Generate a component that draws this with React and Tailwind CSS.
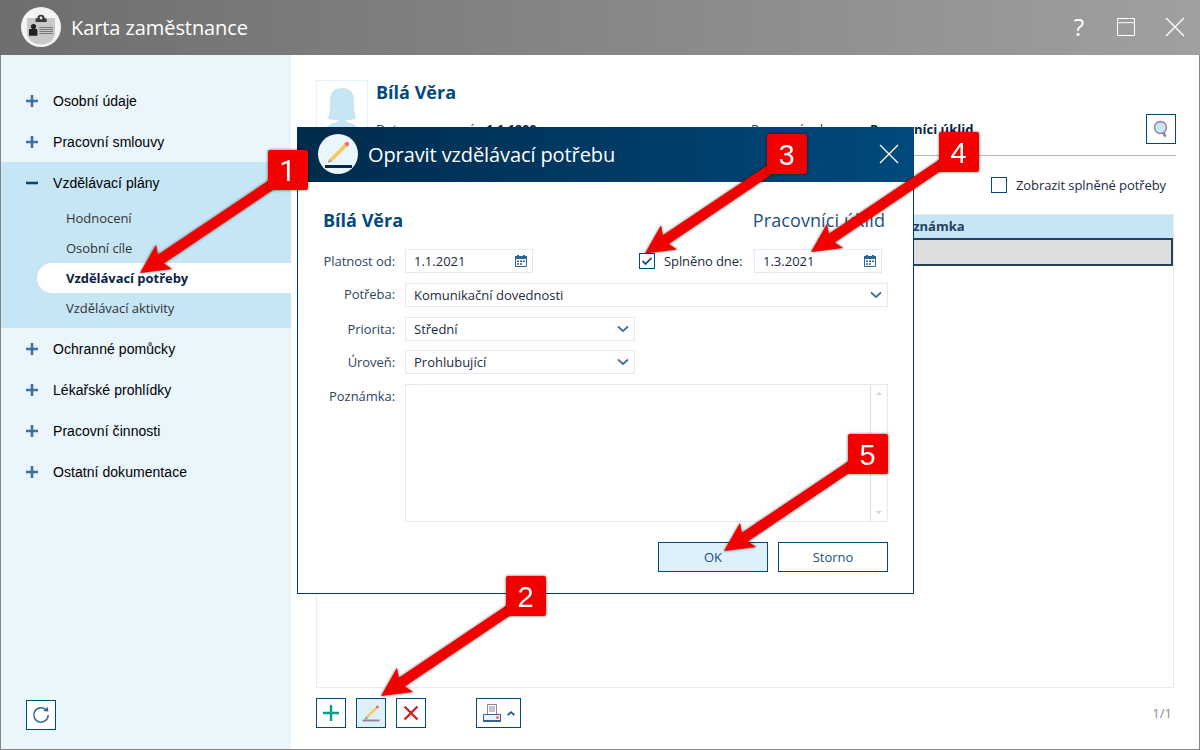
import React, { useState } from 'react';

const MENU = [
  { label: 'Osobní údaje' },
  { label: 'Pracovní smlouvy' },
  {
    label: 'Vzdělávací plány',
    children: ['Hodnocení', 'Osobní cíle', 'Vzdělávací potřeby', 'Vzdělávací aktivity'],
  },
  { label: 'Ochranné pomůcky' },
  { label: 'Lékařské prohlídky' },
  { label: 'Pracovní činnosti' },
  { label: 'Ostatní dokumentace' },
];

// x/y is the badge corner, tipX/tipY is where the arrow points
const STEPS = [
  { n: 1, x: 268, y: 150, tipX: 140, tipY: 273 },
  { n: 2, x: 506, y: 576, tipX: 381, tipY: 696 },
  { n: 3, x: 767, y: 134, tipX: 645, tipY: 253.5 },
  { n: 4, x: 939, y: 132, tipX: 811, tipY: 252 },
  { n: 5, x: 848, y: 434, tipX: 724, tipY: 551 },
];

const CardIcon = () => (
  <svg width="40" height="40" viewBox="0 0 40 40">
    <circle cx="20" cy="20" r="20" fill="#f4f4f4" />
    <path d="M6 11h28v17.500l-4 6a18 18 0 0 1-20 0l-4-6z" fill="#c8c8c8" />
    <path d="M14.500 15v-2.200q0-1.600 2-1.800.2-3.200 3.500-3.200t3.500 3.200q2.200.2 2.200 1.800V15z" fill="#3a3a3a" />
    <circle cx="20" cy="11" r="1.4" fill="#e8e8e8" />
    <circle cx="12.5" cy="19.6" r="2.6" fill="#222" />
    <path d="M8 28.700v-5.600q0-1.200 1.200-1.200h6q1.200 0 1.200 1.200v5.600z" fill="#222" />
    <path d="M18.300 20.500H32M18.300 22.500H32M18.300 24.500H32M18.300 26.500H32" stroke="#6e6e6e" strokeWidth="0.9" />
  </svg>
);

const PencilIcon = ({ size, line }) => (
  <svg width={size} height={size} viewBox="0 0 30 30">
    <path d="M8.6 21.6l2.8-.9-1.8-1.9z" fill="#555" />
    <path d="M9.6 18.8l10.2-10.3 2 2L11.4 20.7z" fill="#fac75a" />
    <path d="M9.7 18.7l1.9 1.9" stroke="#c9b7b0" strokeWidth="1.4" />
    <circle cx="21.8" cy="8.6" r="1.6" fill="#f0666c" />
    <path d="M6 23h18" stroke={line} strokeWidth="2" />
  </svg>
);

const PencilBadge = () => (
  <svg width="40" height="40" viewBox="0 0 40 40">
    <circle cx="20" cy="20" r="20" fill="#eaf5fc" />
    <path d="M10 28.7l3.6-1.1-2.3-2.5z" fill="#8b7f93" />
    <path d="M11.2 25.2l15.3-15.4 2.6 2.6-15.3 15.3z" fill="#fac75a" />
    <path d="M11.3 25.1l2.4 2.4" stroke="#cdb9b0" strokeWidth="1.6" />
    <path d="M26.3 9.8l1.2-1.3q1.5-1.4 3 0t0 3l-1.3 1.2z" fill="#f0666c" />
    <path d="M7 32.5h27" stroke="#002b4c" strokeWidth="3" />
  </svg>
);

const CalendarIcon = () => (
  <svg width="12" height="12" viewBox="0 0 12 12">
    <path d="M.5 1.5h11v10H.5z" fill="#fff" stroke="#2f6593" />
    <path d="M0 1h12v3H0zM2 0h2v2H2zM8 0h2v2H8z" fill="#2f6593" />
    <path
      d="M2 5.500h2v1.500H2zM5 5.500h2v1.500H5zM8 5.500h2v1.500H8zM2 8.200h2v1.500H2zM5 8.200h2v1.500H5z"
      fill="#2f6593"
    />
  </svg>
);

const Chevron = () => (
  <svg width="12" height="8" viewBox="0 0 12 8">
    <path d="M1 1.500l5 4.500 5-4.500" fill="none" stroke="#3f6d9b" strokeWidth="1.7" />
  </svg>
);

const CloseIcon = () => (
  <svg width="20" height="20" viewBox="0 0 20 20">
    <path d="M1 1l18 18M19 1L1 19" stroke="#fff" strokeWidth="1.3" />
  </svg>
);

const DateField = ({ value }) => (
  <div className="flex h-6 w-32 items-center justify-between border border-[#e6e6f4] bg-white pl-2 pr-[5px] text-[#1b2a41]">
    <span>{value}</span>
    <CalendarIcon />
  </div>
);

const SelectField = ({ value }) => (
  <div className="flex h-6 w-full items-center justify-between border border-[#e6e6f4] bg-white pl-2 pr-[5px] text-[#1b2a41]">
    <span>{value}</span>
    <Chevron />
  </div>
);

const Label = ({ children }) => (
  <span className="mr-2.5 w-[92px] shrink-0 text-right tracking-[-0.06px] text-[#2d4663]">{children}</span>
);

const iconButton = 'flex h-[30px] w-[30px] items-center justify-center border border-[#004a7c]';

function TitleBar() {
  return (
    <header className="flex h-[55px] shrink-0 items-center bg-linear-to-r from-[#6e6e6e] to-[#a0a0a0] pb-px pl-[21px] pr-[15px] text-white">
      <CardIcon />
      <h1 className="ml-2.5 flex-1 pt-px text-[20px] tracking-[-0.08px]">Karta zaměstnance</h1>
      <span className="mr-[33px] text-[24px] leading-8">?</span>
      <svg width="18" height="18" viewBox="0 0 18 18" className="mr-[30px]">
        <path d="M.5.5h17v17H.5zM.5 4.700h17" fill="none" stroke="#fff" />
      </svg>
      <CloseIcon />
    </header>
  );
}

function Sidebar({ active, onSelect }) {
  return (
    <aside className="flex w-[290px] shrink-0 flex-col bg-[#eaf5fc] pt-[25px]">
      {MENU.map((item) => (
        <div key={item.label} className={item.children ? 'bg-[#c6e5f5] pb-[5px]' : ''}>
          <div className="flex h-[41px] items-center pl-[25px] font-['Liberation_Sans',Arial,sans-serif] text-[14px] tracking-[0.05px] text-black">
            <svg width="12" height="12" viewBox="0 0 12 12" className="mr-[15px]">
              <path
                d={item.children ? 'M0 6h12' : 'M0 6h12M6 0v12'}
                stroke={item.children ? '#004a80' : '#3f6f9f'}
                strokeWidth="2.6"
              />
            </svg>
            <span className="pt-[2px]">{item.label}</span>
          </div>
          {item.children?.map((child) => (
            <button
              key={child}
              onClick={() => onSelect(child)}
              className={`ml-9 flex h-[30px] w-[254px] items-center rounded-l-full pl-[29px] pt-[2px] text-[13px] tracking-[-0.04px] ${
                child === active ? 'bg-white font-bold text-[#0a1f44]' : 'text-[#333]'
              }`}
            >
              {child}
            </button>
          ))}
        </div>
      ))}
      <button className={`${iconButton} mb-[19px] ml-[25px] mt-auto bg-white`}>
        <svg width="18" height="18" viewBox="0 0 18 18">
          <path d="M16.200 9a7.200 7.200 0 1 1-2.200-5.200" fill="none" stroke="#3a6d9c" strokeWidth="1.6" />
          <path d="M11.200 4.900l4.600-4 .6 4.700z" fill="#2f6593" />
        </svg>
      </button>
    </aside>
  );
}

function EmployeePanel() {
  return (
    <main className="flex flex-1 flex-col pl-[25px] pr-[23px] pt-[25px]">
      <section className="flex h-[76px] border-b border-[#b4b4b4]">
        <div className="flex h-[66px] w-[52px] justify-center border border-[#e3f2fb] pt-[7px]">
          <svg width="40" height="50" viewBox="0 0 40 50">
            <path
              d="M6 31Q8 25 8 13 8 0 20 0T32 13Q32 25 34 31 30 32 23.500 32 24 34 28 35 38 37 38 50H2Q2 37 12 35 16 34 16.500 32 10 32 6 31z"
              fill="#c6e5f5"
            />
          </svg>
        </div>
        <div className="ml-2 flex flex-1 flex-col">
          <h2 className="text-[18px] leading-6 font-bold text-[#004a80]">Bílá Věra</h2>
          <div className="mt-[16px] flex text-[13px] leading-[18px] text-[#2d4663]">
            <span className="w-[110px]">Datum narození:</span>
            <b className="w-[265px] tracking-[-0.2px] text-[#0a1f44]">1.1.1800</b>
            <span className="w-[119px]">Pracovní role:</span>
            <b className="whitespace-nowrap text-[#0a1f44]">Pracovníci úklid</b>
          </div>
        </div>
        <button className={`${iconButton} mt-[34px]`}>
          <svg width="16" height="18" viewBox="0 0 16 18">
            <path d="M9.800 12l2.700 4.600" stroke="#8f8299" strokeWidth="2.6" />
            <circle cx="7.5" cy="7.5" r="6" fill="#c6e5f5" stroke="#8f8299" strokeWidth="1.4" />
          </svg>
        </button>
      </section>

      <label className="mr-[10px] mt-[20px] flex items-center justify-end gap-[9px] text-[13px] leading-[18px] tracking-[-0.08px] text-[#1b2a41]">
        <span className="h-4 w-4 border border-[#004a7c] bg-white"></span>
        Zobrazit splněné potřeby
      </label>

      <div className="mr-[2px] mt-[20px] h-[474px] border border-[#e9e9f6]">
        <div className="h-[23px] bg-[#c6e5f5] pl-[580px] text-[13px] leading-[23px] font-bold text-[#27405c]">
          Poznámka
        </div>
        <div className="h-7 border-2 border-[#27405c] bg-[#dedede]"></div>
      </div>

      <footer className="mt-[10px] flex items-center">
        <button className={iconButton}>
          <svg width="18" height="18" viewBox="0 0 18 18">
            <path d="M1 9h16M9 1v16" stroke="#00a08c" strokeWidth="2.4" />
          </svg>
        </button>
        <button className={`${iconButton} ml-2.5 bg-[#def0fa]`}>
          <PencilIcon size={30} line="#8f8299" />
        </button>
        <button className={`${iconButton} ml-2.5`}>
          <svg width="16" height="16" viewBox="0 0 16 16">
            <path d="M1.500 1.500l13 13M14.500 1.500l-13 13" stroke="#cc2229" strokeWidth="2.4" />
          </svg>
        </button>
        <button className="ml-[50px] flex h-[30px] w-[45px] items-center border border-[#004a7c] pl-[6px]">
          <svg width="18" height="18" viewBox="0 0 18 18">
            <path d="M4.500.5h9v10h-9z" fill="#fff" stroke="#8f8299" />
            <path d="M6 2h6v6H6z" fill="#c9c1cc" />
            <path d="M.5 10.500h17v7H.5z" fill="#eaf5fc" stroke="#2f6593" />
            <path d="M0 16h18v2H0z" fill="#2f6593" />
            <circle cx="14.5" cy="13.5" r="1.5" fill="#f0666c" />
          </svg>
          <svg width="8" height="5" viewBox="0 0 8 5" className="ml-[6px]">
            <path d="M.6 4.200L4 1.200l3.400 3" fill="none" stroke="#1d4f80" strokeWidth="1.8" />
          </svg>
        </button>
        <span className="ml-auto mr-[4px] pt-[2px] text-[13px] text-[#8a8a8a]">1/1</span>
      </footer>
    </main>
  );
}

function EditDialog() {
  const [done, setDone] = useState(true);

  return (
    <div className="absolute left-[297px] top-[127px] flex h-[467px] w-[617px] flex-col bg-white text-[13px] leading-[18px]">
      <header className="flex h-[55px] shrink-0 items-center bg-linear-to-r from-[#002b4c] to-[#004a7d] pb-px pl-[21px] pr-[15px] text-white">
        <PencilBadge />
        <h2 className="ml-2.5 flex-1 pt-px text-[20px] tracking-[-0.1px]">Opravit vzdělávací potřebu</h2>
        <CloseIcon />
      </header>

      <div className="flex flex-1 flex-col border border-t-0 border-[#003a66] pl-[25px] pr-[25px] pt-[26px]">
        <div className="mr-[3px] flex justify-between text-[18px] leading-6">
          <b className="text-[#004a80]">Bílá Věra</b>
          <span className="tracking-[0.1px] text-[#1d4f80]">Pracovníci úklid</span>
        </div>

        <div className="-ml-[20px] mt-[17px] flex items-center">
          <Label>Platnost od:</Label>
          <DateField value="1.1.2021" />
          <label className="ml-[106px] flex w-[115px] items-center gap-[9px] text-[#1b2a41]">
            <button
              onClick={() => setDone(!done)}
              className="flex h-4 w-4 items-center justify-center border border-[#004a7c] bg-white"
            >
              {done && (
                <svg width="12" height="10" viewBox="0 0 12 10">
                  <path d="M1.500 5l3 3 6-6.200" fill="none" stroke="#1d4f80" strokeWidth="1.8" />
                </svg>
              )}
            </button>
            <span className="whitespace-nowrap tracking-[-0.1px]">Splněno dne:</span>
          </label>
          <DateField value="1.3.2021" />
        </div>
        <div className="-ml-[20px] mt-[10px] flex items-center">
          <Label>
            <span className="block pb-[2px]">Potřeba:</span>
          </Label>
          <SelectField value="Komunikační dovednosti" />
        </div>
        <div className="-ml-[20px] mt-[10px] flex w-[332px] items-center">
          <Label>Priorita:</Label>
          <SelectField value="Střední" />
        </div>
        <div className="-ml-[20px] mt-[9px] flex w-[332px] items-center">
          <Label>Úroveň:</Label>
          <SelectField value="Prohlubující" />
        </div>
        <div className="-ml-[20px] mt-[10px] flex items-start">
          <Label>
            <span className="block pt-[3px]">Poznámka:</span>
          </Label>
          <div className="flex h-[138px] flex-1 justify-end border border-[#e6e6f4]">
            <div className="flex w-[17px] flex-col items-center justify-between border-l border-[#dcdce0] py-[7px]">
              <svg width="6" height="3"><path d="M0 3l3-3 3 3z" fill="#d2d2d6" /></svg>
              <svg width="6" height="3"><path d="M0 0h6L3 3z" fill="#d2d2d6" /></svg>
            </div>
          </div>
        </div>

        <div className="mt-5 flex justify-end gap-2.5 text-[#1d4f80]">
          <button className="h-[30px] w-[110px] border border-[#004a7c] bg-[#def0fa]">OK</button>
          <button className="h-[30px] w-[110px] border border-[#004a7c] bg-white">Storno</button>
        </div>
      </div>
    </div>
  );
}

function StepMarkers() {
  return (
    <svg className="pointer-events-none absolute left-0 top-0" width="1200" height="750" viewBox="0 0 1200 750">
      {STEPS.map((s) => (
        <g key={s.n} className="[filter:drop-shadow(0_0_1.5px_rgba(0,0,0,0.6))]">
          <path
            d="M0 0L29-14.500 25-5.300H160V4.800L25 5.300 29 14.500z"
            fill="#f20000"
            transform={`translate(${s.tipX} ${s.tipY}) rotate(-33.8)`}
          />
        </g>
      ))}
      {STEPS.map((s) => (
        <g key={s.n} className="[filter:drop-shadow(0_0_1.5px_rgba(0,0,0,0.6))]">
          <rect x={s.x} y={s.y} width="40" height="40" rx="2" fill="#f20000" />
          {/* Roboto has a plain "1" without the foot */}
          <text
            x={s.x + 19.5}
            y={s.y + 31}
            textAnchor="middle"
            fill="#fff"
            className={
              s.n === 1
                ? 'font-[Roboto,sans-serif] text-[29px]'
                : "font-['Liberation_Sans',Arial,sans-serif] text-[29px]"
            }
          >
            {s.n}
          </text>
        </g>
      ))}
    </svg>
  );
}

export default function App() {
  const [active, setActive] = useState('Vzdělávací potřeby');

  return (
    <div className="relative flex h-[750px] w-[1200px] flex-col overflow-hidden bg-white font-['Open_Sans',sans-serif]">
      <TitleBar />
      <div className="flex flex-1 border border-t-0 border-[#858585]">
        <Sidebar active={active} onSelect={setActive} />
        <EmployeePanel />
      </div>
      <EditDialog />
      <StepMarkers />
    </div>
  );
}
